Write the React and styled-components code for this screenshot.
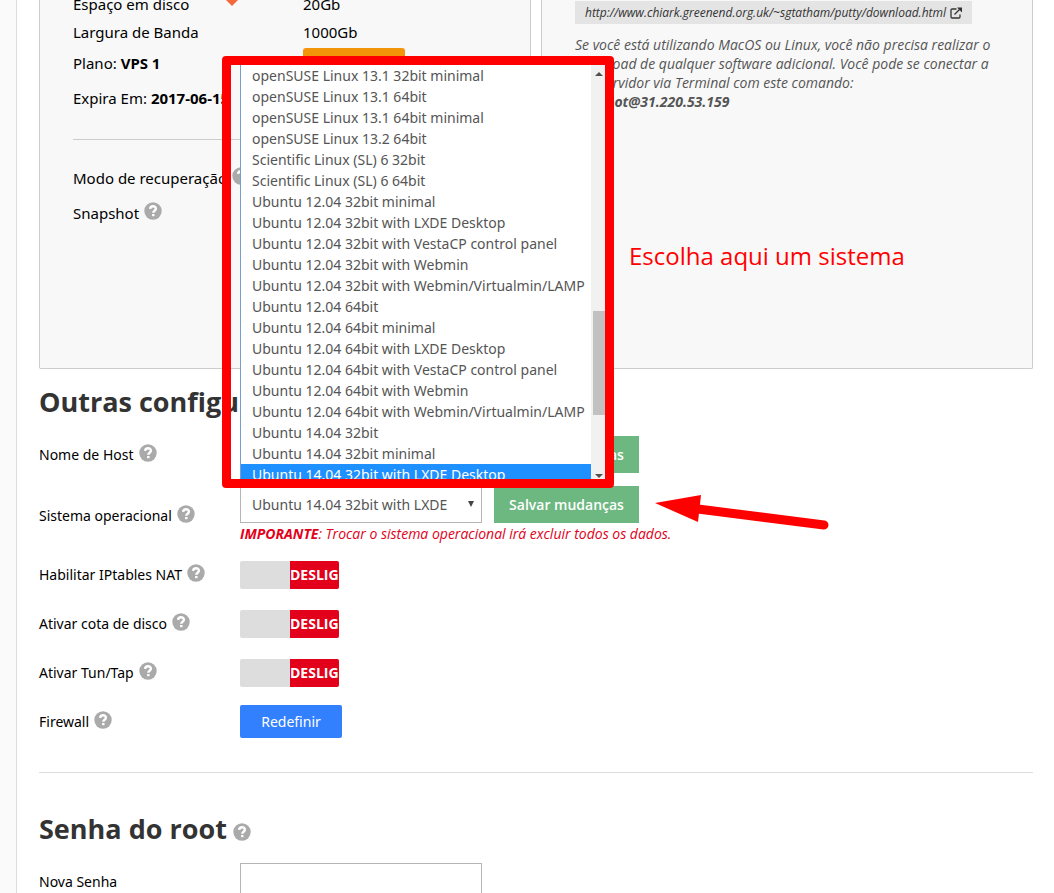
import React from "react";
import styled, { createGlobalStyle, css } from "styled-components";

const GlobalStyle = createGlobalStyle`
  * { box-sizing: border-box; }
  html { overflow: hidden; }
  body {
    margin: 0;
    background: #fafafa;
    color: #000;
    font: 15px/20px "Noto Sans", "Open Sans", sans-serif;
  }
  h2, p { margin: 0; }
  button, input, select { font: inherit; }
`;

const Page = styled.main`
  margin-left: 16px;
  padding: 0 21px 0 22px;
  min-height: 100vh;
  background: #fff;
  border-left: 1px solid #ddd;
`;

const Panels = styled.div`
  display: grid;
  grid-template-columns: 1fr 1fr;
  gap: 10px;
  min-height: 369px;
`;

const Panel = styled.section`
  padding: 0 33px;
  background: #f8f8f8;
  border: 1px solid #ccc;
  border-top: 0;
  border-radius: 0 0 2px 2px;
`;

const Specs = styled.div`
  margin-top: -10px;
  padding-bottom: 23px;
  border-bottom: 1px solid #ccc;
`;

const SpecRow = styled.div`
  display: grid;
  grid-template-columns: 153px 77px 1fr;
  align-items: center;
  min-height: ${(p) => p.$height}px;
`;

const SpecText = styled.div`
  grid-column: ${(p) => (p.$wide ? "1 / 3" : "auto")};
  white-space: nowrap;
`;

const Marker = styled.svg`
  display: block;
  width: 12px;
  height: 12px;
`;

const UpgradeButton = styled.button`
  width: 102px;
  height: 30px;
  padding: 0;
  border: 0;
  border-radius: 3px;
  background: #f39508;
`;

const Extras = styled.div`
  padding-top: 20px;
`;

const ExtraRow = styled.div`
  display: flex;
  align-items: center;
  height: 35px;
  white-space: nowrap;
`;

const HelpButton = styled.button`
  display: inline-flex;
  flex: none;
  margin: 0 0 3px 5px;
  padding: 0;
  border: 0;
  background: none;
  svg { display: block; width: 18px; height: 18px; }
`;

const DownloadLink = styled.a`
  display: flex;
  width: fit-content;
  align-items: center;
  gap: 4px;
  height: 23px;
  margin-top: 1px;
  padding: 0 10px;
  background: #e4e4e4;
  color: #333;
  font-family: "Open Sans", sans-serif;
  font-size: 12px;
  font-style: italic;
  text-decoration: none;
  white-space: nowrap;
  svg { width: 12px; height: 12px; }
`;

const Instructions = styled.p`
  margin-top: 11px;
  color: #555;
  font-family: "Open Sans", sans-serif;
  font-size: 14px;
  line-height: 19px;
  font-style: italic;
`;

const Heading = styled.h2`
  display: flex;
  align-items: center;
  padding: 16px 0 4px;
  color: #333;
  font-family: "Open Sans", sans-serif;
  font-size: 27px;
  line-height: 34px;
  ${HelpButton} { margin: 6px 0 0 6px; }
`;

const Form = styled.form`
  display: grid;
  font-size: 14px;
`;

const FormRow = styled.div`
  display: grid;
  grid-template-columns: 201px 1fr;
  align-items: center;
  min-height: ${(p) => p.$height}px;
`;

const Label = styled.label`
  display: flex;
  align-items: center;
  white-space: nowrap;
`;

const Field = styled.div`
  position: relative;
  display: flex;
  align-items: center;
  gap: 12px;
`;

const box = css`
  width: 242px;
  height: 37px;
  padding: 0 11px;
  border: 1px solid #b5b5b5;
  border-radius: 0;
  background: #fff;
  color: #555;
`;

const TextInput = styled.input`
  ${box}
`;

const SelectBox = styled.div`
  position: relative;
  &::after {
    content: "";
    position: absolute;
    right: 8px;
    top: 15px;
    border: 3px solid transparent;
    border-top: 6px solid #444;
    border-bottom: 0;
    pointer-events: none;
  }
`;

const Select = styled.select`
  ${box}
  display: block;
  padding-right: 24px;
  appearance: none;
`;

const SaveButton = styled.button`
  height: 37px;
  width: 145px;
  padding: 0;
  border: 0;
  background: #6cb880;
  color: #fff;
  font-family: "Open Sans", sans-serif;
  font-weight: 600;
`;

const Warning = styled.p`
  color: #e2001a;
  font-family: "Open Sans", sans-serif;
  font-style: italic;
  line-height: 22px;
`;

const Popup = styled.div`
  position: absolute;
  z-index: 2;
  left: 0;
  bottom: calc(100% + 7px);
  display: flex;
  width: 365px;
  height: 414px;
  overflow: hidden;
  background: #fff;
  border-left: 1px solid #7a9bd0;
`;

const OptionList = styled.ul`
  flex: 1;
  margin: 0;
  padding: 0;
  list-style: none;
`;

const Option = styled.li`
  height: 21px;
  padding-left: 11px;
  line-height: 21px;
  white-space: nowrap;
  background: ${(p) => (p.$active ? "#1e90ff" : "#fff")};
  color: ${(p) => (p.$active ? "#fff" : "#555")};
`;

const ScrollTrack = styled.div`
  display: flex;
  flex-direction: column;
  align-items: flex-end;
  width: 14px;
  padding: 7px 2px 1px 0;
  background: #f1f1f1;
`;

const ScrollThumb = styled.div`
  width: 12px;
  height: 104px;
  margin: 235px -2px auto 0;
  background: #c1c1c1;
`;

const ScrollArrow = styled.span`
  width: 8px;
  height: 4px;
  background: #505050;
  clip-path: ${(p) => (p.$up ? "polygon(50% 0, 100% 100%, 0 100%)" : "polygon(0 0, 100% 0, 50% 100%)")};
`;

const Frame = styled.div`
  position: absolute;
  z-index: 3;
  left: -18px;
  bottom: calc(100% - 2px);
  width: 392px;
  height: 432px;
  border: 9px solid #f00;
  border-radius: 4px;
  pointer-events: none;
`;

const Note = styled.p`
  position: absolute;
  z-index: 3;
  left: 389px;
  bottom: calc(100% + 213px);
  color: #f00;
  font-family: "Open Sans", sans-serif;
  font-size: 24px;
  line-height: 34px;
  white-space: nowrap;
`;

const Arrow = styled.svg`
  position: absolute;
  left: 414px;
  top: 8px;
  width: 176px;
  height: 38px;
`;

const Toggles = styled.div`
  padding-top: 5px;
`;

const Toggle = styled.label`
  display: flex;
  width: 99px;
  height: 28px;
  overflow: hidden;
  border-radius: 2px;
  background: #ddd;
  input { position: absolute; opacity: 0; }
  span {
    width: 49px;
    margin-left: auto;
    overflow: hidden;
    background: #e2001a;
    color: #fff;
    font-family: "Open Sans", sans-serif;
    font-weight: 700;
    line-height: 28px;
    white-space: nowrap;
  }
`;

const ResetButton = styled.button`
  width: 102px;
  height: 33px;
  padding: 0;
  border: 0;
  border-radius: 2px;
  background: #3380ff;
  color: #fff;
`;

const Divider = styled.hr`
  width: 100%;
  margin: 26px 0 23px;
  border: 0;
  border-top: 1px solid #ddd;
`;

const OPTIONS = [
  "openSUSE Linux 13.1 32bit minimal",
  "openSUSE Linux 13.1 64bit",
  "openSUSE Linux 13.1 64bit minimal",
  "openSUSE Linux 13.2 64bit",
  "Scientific Linux (SL) 6 32bit",
  "Scientific Linux (SL) 6 64bit",
  "Ubuntu 12.04 32bit minimal",
  "Ubuntu 12.04 32bit with LXDE Desktop",
  "Ubuntu 12.04 32bit with VestaCP control panel",
  "Ubuntu 12.04 32bit with Webmin",
  "Ubuntu 12.04 32bit with Webmin/Virtualmin/LAMP",
  "Ubuntu 12.04 64bit",
  "Ubuntu 12.04 64bit minimal",
  "Ubuntu 12.04 64bit with LXDE Desktop",
  "Ubuntu 12.04 64bit with VestaCP control panel",
  "Ubuntu 12.04 64bit with Webmin",
  "Ubuntu 12.04 64bit with Webmin/Virtualmin/LAMP",
  "Ubuntu 14.04 32bit",
  "Ubuntu 14.04 32bit minimal",
  "Ubuntu 14.04 32bit with LXDE Desktop",
];

const TOGGLES = [
  ["nat", "Habilitar IPtables NAT"],
  ["quota", "Ativar cota de disco"],
  ["tun", "Ativar Tun/Tap"],
];

function Help() {
  return (
    <HelpButton type="button" aria-label="Ajuda">
      <svg viewBox="0 0 18 18">
        <circle cx="9" cy="9" r="8.7" fill="#aaa" />
        <path d="M6.1 6.9C6.3 4.9 7.5 4.2 9 4.2c1.7 0 2.9 1 2.9 2.5C11.9 8.7 9.3 8.7 9.3 10.7" fill="none" stroke="#fff" strokeWidth="2.4" />
        <rect x="8.1" y="12" width="2.4" height="2.2" fill="#fff" />
      </svg>
    </HelpButton>
  );
}

export default function App() {
  return (
    <>
      <GlobalStyle />
      <Page>
        <Panels>
          <Panel>
            <Specs>
              <SpecRow $height={28}>
                <SpecText>Espaço em disco</SpecText>
                <Marker viewBox="0 0 12 12"><path d="M0 0V2L6 8l6-6V0z" fill="#f4693c" /></Marker>
                <SpecText>20Gb</SpecText>
              </SpecRow>
              <SpecRow $height={28}>
                <SpecText $wide>Largura de Banda</SpecText>
                <SpecText>1000Gb</SpecText>
              </SpecRow>
              <SpecRow $height={34}>
                <SpecText $wide>Plano: <b>VPS 1</b></SpecText>
                <UpgradeButton type="button" aria-label="Plano" />
              </SpecRow>
              <SpecRow $height={36}>
                <SpecText $wide>Expira Em: <b>2017-06-15</b></SpecText>
              </SpecRow>
            </Specs>
            <Extras>
              <ExtraRow>Modo de recuperação<Help /></ExtraRow>
              <ExtraRow>Snapshot<Help /></ExtraRow>
            </Extras>
          </Panel>
          <Panel>
            <DownloadLink href="#download">
              http://www.chiark.greenend.org.uk/~sgtatham/putty/download.html
              <svg viewBox="0 0 12 12" fill="none" stroke="#333" strokeWidth="1.3">
                <path d="M6.5 2H2.2Q1 2 1 3.2v6.6Q1 11 2.2 11h6.6Q10 11 10 9.800V7.5M4.5 7.5l5-5" />
                <path d="M7 .5H12V5.5z" fill="#333" stroke="none" />
              </svg>
            </DownloadLink>
            <Instructions>
              Se você está utilizando MacOS ou Linux, você não precisa realizar o
              download de qualquer software adicional. Você pode se conectar a
              seu servidor via Terminal com este comando:
              <br />
              <b>ssh root@31.220.53.159</b>
            </Instructions>
          </Panel>
        </Panels>

        <Heading>Outras configurações</Heading>
        <Form onSubmit={(e) => e.preventDefault()}>
          <FormRow $height={63}>
            <Label htmlFor="host">Nome de Host<Help /></Label>
            <Field>
              <TextInput id="host" />
              <SaveButton>Salvar mudanças</SaveButton>
            </Field>
          </FormRow>
          <FormRow $height={59}>
            <Label htmlFor="os">Sistema operacional<Help /></Label>
            <div>
              <Field>
                <SelectBox>
                  <Select id="os">
                    <option>Ubuntu 14.04 32bit with LXDE</option>
                  </Select>
                </SelectBox>
                <SaveButton>Salvar mudanças</SaveButton>
                <Popup>
                  <OptionList role="listbox" aria-label="Sistema operacional">
                    {OPTIONS.map((name, i) => (
                      <Option key={name} role="option" aria-selected={i === 19} $active={i === 19}>{name}</Option>
                    ))}
                  </OptionList>
                  <ScrollTrack>
                    <ScrollArrow $up />
                    <ScrollThumb />
                    <ScrollArrow />
                  </ScrollTrack>
                </Popup>
                <Frame />
                <Note>Escolha aqui um sistema</Note>
                <Arrow viewBox="0 0 176 38">
                  <path d="M44 15 170 31" stroke="#f00" strokeWidth="9" strokeLinecap="round" />
                  <path d="M1 9 47 1 44 28z" fill="#f00" />
                </Arrow>
              </Field>
              <Warning><b>IMPORANTE</b>: Trocar o sistema operacional irá excluir todos os dados.</Warning>
            </div>
          </FormRow>
          <Toggles>
            {TOGGLES.map(([id, text]) => (
              <FormRow key={id} $height={49}>
                <Label htmlFor={id}>{text}<Help /></Label>
                <Toggle>
                  <input id={id} type="checkbox" />
                  <span>DESLIG</span>
                </Toggle>
              </FormRow>
            ))}
          </Toggles>
          <FormRow $height={49}>
            <Label htmlFor="firewall">Firewall<Help /></Label>
            <Field><ResetButton id="firewall" type="button">Redefinir</ResetButton></Field>
          </FormRow>
          <Divider />
        </Form>
        <Heading>Senha do root<Help /></Heading>
        <Form>
          <FormRow $height={63}>
            <Label htmlFor="password">Nova Senha</Label>
            <Field><TextInput id="password" type="password" /></Field>
          </FormRow>
        </Form>
      </Page>
    </>
  );
}
